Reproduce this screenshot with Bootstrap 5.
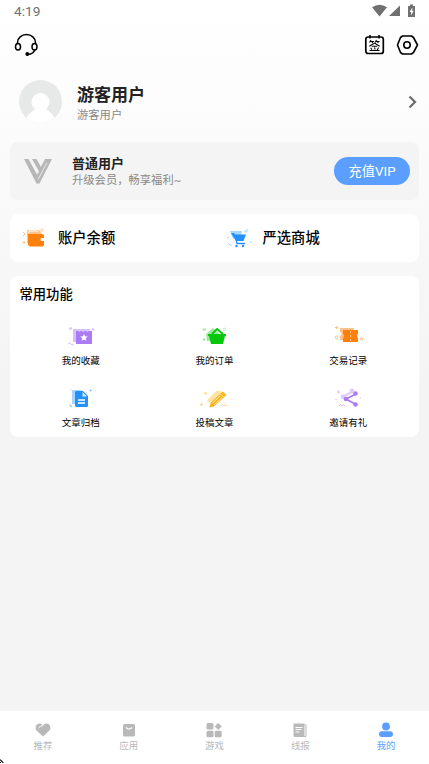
<!DOCTYPE html>
<html lang="zh-CN">
<head>
<meta charset="utf-8">
<meta name="viewport" content="width=device-width, initial-scale=1">
<title>我的</title>
<link href="https://cdn.jsdelivr.net/npm/bootstrap@5.3.0/dist/css/bootstrap.min.css" rel="stylesheet">
<style>
body{font-family:Roboto,"Noto Sans CJK SC",sans-serif;height:764px;overflow:hidden;background:linear-gradient(#fff 0,#fcfcfc 110px,#f8f8f8 240px,#f4f4f4 390px);color:#000;line-height:1}
svg{display:block;flex:none;overflow:visible}
.status{height:24px;padding:0 13px 0 14px;color:#707070;font-size:13.7px}
.tools{height:41px;padding:0 11px 0 14px}
.sign{margin-right:10px}
.profile{height:77px;padding:0 13px 4px 19px}
.profile .names{padding:4px 0 0 15px}
.name{font-size:17px;font-weight:700;line-height:24px;color:#222}
.sub{font-size:11.3px;line-height:18px;color:#888}
.panel{margin:0 10px 14px;border-radius:8px;background:#fff}
.vip{height:58px;background:#f4f4f4;padding:0 9px 0 14px}
.vip .names{padding:3px 0 0 17px}
.level{font-size:13px;font-weight:700;line-height:17px;color:#222}
.charge{width:76px;height:28px;background:#5a9fff;color:#fff;font-size:13.3px;line-height:30px}
.assets{height:48px;font-size:14.3px;font-weight:500}
.features{height:161px}
.features h2{font-size:13.3px;font-weight:500;line-height:18px;margin:0;padding:10px 0 2px 9.500px}
.feature{height:62px;font-size:9.5px}
.feature svg{margin:2px 0 0 2px}
.feature span{line-height:14px;margin-top:6px}
.tabs{height:53px;background:#fff;color:#b9b9b9;font-size:9.4px}
.tabs span{line-height:14px;margin-top:1px}
.tabs .current{color:#5a9fff}
.pointer{left:0;bottom:0}
</style>
<script src="https://cdn.jsdelivr.net/npm/bootstrap@5.3.0/dist/js/bootstrap.bundle.min.js"></script>
</head>
<body class="d-flex flex-column position-relative">
<div class="status d-flex align-items-center justify-content-between">
  <span>4:19</span>
  <svg width="44" height="14" viewBox="0 1 44 14" fill="#707070"><path d="M0 3.300Q7.500-2 15 3.300L7.500 12.500ZM28 1.500V12H17ZM36 2h2V.500h3V2h2v11h-7Z"/><path d="M40.400 3.500 37.600 8h1.500v3.500l2.600-4.700h-1.500Z" fill="#fff"/></svg>
</div>
<header class="tools d-flex align-items-center justify-content-between">
  <svg width="25" height="24" viewBox="0 0 25 24" fill="none" stroke="#000" stroke-width="1.500"><path d="M3.500 10.500V9.500a9 8 0 0 1 18 0v1M21 16.500q-1.500 4.500-7 5"/><ellipse cx="4" cy="13.700" rx="2.500" ry="3.300"/><ellipse cx="20.500" cy="13.700" rx="2.500" ry="3.300"/><circle cx="13.300" cy="21" r="1.200" fill="#000"/></svg>
  <div class="d-flex align-items-center">
    <svg class="sign" width="19" height="20" viewBox="-.5 0 19 20" fill="none" stroke="#000"><rect x=".3" y="2" width="17.500" height="16.500" rx="2.300" stroke-width="1.700"/><path d="M4.500 0v3.500M13.500 0v3.500" stroke-width="1.500"/><path d="m5.500 5-1.500 2.500M5 6.500h3.500M6.500 6.500l.7 1.500M11 5 9.700 7.500M10.500 6.500H14M12 6.500l.7 1.500M3.800 11.300 9 8l5.200 3.300M6.300 11.300h5.400M5.300 12.800l1 2M9 12.300l.6 2.200M13 12.500l-1.500 3M4 15.500h10" stroke-width="1.050"/></svg>
    <svg width="24" height="20" viewBox="0 0 24 20" fill="none" stroke="#000" stroke-width="1.600" stroke-linejoin="round"><path d="M7.500 1h9l2 1.500L22.500 10l-4 7.500-2 1.500h-9l-2-1.500L2.500 10 5.500 2.500Z" transform="translate(1)"/><circle cx="13" cy="10" r="3.200"/></svg>
  </div>
</header>
<section class="profile d-flex align-items-center">
  <svg width="43" height="43" viewBox="0 0 43 43"><defs><clipPath id="face"><circle cx="21.500" cy="21.500" r="21.500"/></clipPath></defs><circle cx="21.500" cy="21.500" r="21.500" fill="#e7e9e9"/><g fill="#fff" clip-path="url(#face)"><circle cx="21.500" cy="22" r="9"/><path d="M7 43q0-10 10-14h9q10 4 10 14Z"/></g></svg>
  <div class="names flex-grow-1"><div class="name">游客用户</div><div class="sub">游客用户</div></div>
  <svg width="8" height="12" viewBox="0 0 8 12" fill="none" stroke="#6c6c6c" stroke-width="2.200"><path d="M1.500 .5 7 6l-5.500 5.500"/></svg>
</section>
<section class="panel vip d-flex align-items-center">
  <svg width="31" height="27" viewBox="0 0 31 27" fill="#b7b7b7"><path d="M0 1h4.500L13 16.500l1.800-3.500L8 1h4.500l4.500 8 4-8H28L15.500 25.500h-3L0 1Z"/><path d="m14 21.500 9-17M6.500 1.500l8 14" fill="none" stroke="#f4f4f4" stroke-width=".8"/></svg>
  <div class="names flex-grow-1"><div class="level">普通用户</div><div class="sub">升级会员，畅享福利~</div></div>
  <button type="button" class="charge btn rounded-pill p-0 border-0">充值VIP</button>
</section>
<section class="panel assets row g-0 align-items-center">
  <div class="col-6 d-flex align-items-center">
    <svg class="ms-2 me-2" width="32" height="24" viewBox="0 0 32 24"><path d="M9 4h12l2 2v11H9Z" fill="#ffc48b"/><path d="M11 7V5h8l1 1" fill="none" stroke="#fff"/><path d="M10 8h14l2 1v3h-3l-1 1.500 1 1.500h3v4l-1 1.500H12L10 19Z" fill="#ff810c"/><path d="m5 6 2 2-2 2M6 15v3M4.500 16.500h3" fill="none" stroke="#ffc48b"/><circle cx="24" cy="4" r="1.300" fill="none" stroke="#ffd4a8"/></svg>
    <span>账户余额</span>
  </div>
  <div class="col-6 d-flex align-items-center">
    <svg class="ms-2 me-2" width="32" height="24" viewBox="0 0 32 24"><path d="M7 5h12l-2 8h-7Z" fill="#a7d5ff"/><path d="M8 7h3l1 1.500h11L20.500 15H13Z" fill="#2490fa"/><path d="M12 9l2 8.500h8" fill="none" stroke="#2490fa" stroke-width="1.300"/><g fill="#2490fa"><circle cx="13.500" cy="20" r="1.200"/><circle cx="20" cy="20" r="1.200"/></g><path d="M22 4v2h2V3M4 11l2 1M5 17l2 2M27 16h2M9 19H7" fill="none" stroke="#a7d5ff"/></svg>
    <span>严选商城</span>
  </div>
</section>
<section class="panel features">
  <h2>常用功能</h2>
  <div class="row g-0 pt-3 px-1">
    <div class="feature col-4 d-flex flex-column align-items-center">
      <svg width="32" height="24" viewBox="0 0 32 24"><path d="M7 5h17v13H7Z" fill="#d8c0fb"/><path d="M10 7h2l1 1 2-1h1l1 1 2-1h1l1 1 2-1h3v13H10Z" fill="#aa7bf4"/><path d="m18 10 1.100 2.300 2.500.3-1.800 1.700.5 2.500-2.300-1.200-2.300 1.200.5-2.500-1.800-1.700 2.500-.3Z" fill="#fff"/><path d="M3 4h3l-1.500 2ZM27 4v3M25.500 5.500h3M2 20q1.500-2 3 0t3 0" fill="none" stroke="#d8b8fb"/></svg><span>我的收藏</span></div>
    <div class="feature col-4 d-flex flex-column align-items-center">
      <svg width="32" height="24" viewBox="0 0 32 24"><path d="M7 10 14 4l6 5v8H8Z" fill="#9ee99e"/><path d="m13 10 5-5 6 5" fill="none" stroke="#08c80b" stroke-width="2"/><path d="M9 10h18v2h-1l-2 8H12l-2-8H9Z" fill="#08c80b"/><path d="M4 5h3L5 7ZM5 14v3M3.500 15.500h3" fill="none" stroke="#9ee99e"/><circle cx="25.500" cy="5.500" r="1.300" fill="none" stroke="#b8efb8"/></svg><span>我的订单</span></div>
    <div class="feature col-4 d-flex flex-column align-items-center">
      <svg width="32" height="24" viewBox="0 0 32 24"><path d="M7 4h14v12H7v-4l2-2-2-2Z" fill="#ffc18a"/><path d="M10 6h15v4q-2 1.500 0 4v4H10v-4q2-2 0-4Z" fill="#ff810c"/><path d="M17.500 7v11" stroke="#ffc18a" stroke-dasharray="2 2"/><path d="M3.500 2v3M2 3.500h3" stroke="#ffc18a"/><g fill="none" stroke="#ffc18a"><circle cx="3.500" cy="13.500" r="1.300"/><circle cx="28.500" cy="15" r="1.300"/></g></svg><span>交易记录</span></div>
    <div class="feature col-4 d-flex flex-column align-items-center">
      <svg width="32" height="24" viewBox="0 0 32 24"><path d="M6 4h9l4 4v10H6Z" fill="#a7d5ff"/><path d="M10 5h7l5 5v10l-1 1H10l-1-1V6Z" fill="#2490fa"/><path d="M16.500 6v4.500H21" fill="#d5ebff"/><path d="M12 14h7M12 17h7" stroke="#fff" stroke-width="1.300"/><path d="m4 18 2 2.500H4ZM24.500 3v3M23 4.500h3M5 3v1M26 16v1" fill="none" stroke="#a7d5ff"/></svg><span>文章归档</span></div>
    <div class="feature col-4 d-flex flex-column align-items-center">
      <svg width="32" height="24" viewBox="0 0 32 24"><path d="m8 16 1-3L18 4.500l5 1-9 10Z" fill="#ffe2a3"/><path d="M10.500 21.500 11.500 17 23 6q1-.5 2 .5l1.500 1.500q.8 1 0 2L15 20.500Z" fill="#fcb41a"/><path d="m13.500 17 7.500-7M15 19l8-7.500M21.500 8l3 3" stroke="#fff" stroke-width=".7"/><path d="M5 7h3L6.500 8.500ZM2.500 17v3M1 18.500h3M22 20l1.500-1.500L25 20l1.500-1.500L28 20" fill="none" stroke="#ffd382"/></svg><span>投稿文章</span></div>
    <div class="feature col-4 d-flex flex-column align-items-center">
      <svg width="32" height="24" viewBox="0 0 32 24"><path d="m9 11 10-5" stroke="#decdfb" stroke-width="2"/><g fill="#decdfb"><circle cx="10" cy="11" r="2.400"/><circle cx="19" cy="5" r="2.400"/></g><path d="m23 8-10 5 9 5" fill="none" stroke="#aa7bf4" stroke-width="1.800"/><g fill="#aa7bf4"><circle cx="13" cy="13" r="2.300"/><circle cx="22.500" cy="7.500" r="2.200"/><circle cx="22.500" cy="18.500" r="2.200"/></g><path d="M5.500 4.500v3M4 6h3M6 20l1.500-1.500L9 20l1.500-1.500L12 20M3 13v1M27 12h1" fill="none" stroke="#e2b9f8"/></svg><span>邀请有礼</span></div>
  </div>
</section>
<nav class="tabs d-flex mt-auto">
  <div class="flex-fill d-flex flex-column align-items-center pt-2"><div class="pt-1"><svg width="16" height="15" viewBox="0 0 16 15"><path d="M8 13.500 1.500 7.500C-.5 5 1 .5 4.500.5 6 .5 7.300 1.300 8 2.500 8.700 1.300 10 .5 11.500.5c3.500 0 5 4.500 3 7Z" fill="#b9b9b9"/><path d="m3.500 5 2-1.700L8 2.500" fill="none" stroke="#fff"/></svg></div><span>推荐</span></div>
  <div class="flex-fill d-flex flex-column align-items-center pt-2"><div class="pt-1"><svg width="16" height="15" viewBox="0 0 16 15"><rect x="2" y="1" width="12" height="12.500" rx="1.500" fill="#b9b9b9"/><path d="M5 4.500q3 3 6 0" fill="none" stroke="#fff" stroke-width="1.100"/></svg></div><span>应用</span></div>
  <div class="flex-fill d-flex flex-column align-items-center pt-2"><div class="pt-1"><svg width="16" height="15" viewBox="0 0 16 15" fill="#b9b9b9"><rect x=".5" y="0" width="7" height="6.500" rx="1.500"/><rect x=".5" y="7.700" width="7" height="6.500" rx="1.500"/><rect x="8.700" y="7.700" width="7" height="6.500" rx="1.500"/><path d="m12.200 0 3.300 3.400-3.300 3.400-3.300-3.400Z" stroke="#b9b9b9" stroke-width=".4"/></svg></div><span>游戏</span></div>
  <div class="flex-fill d-flex flex-column align-items-center pt-2"><div class="pt-1"><svg width="16" height="15" viewBox="0 0 16 15"><path d="M1.500.5h11V14h-10l-1-1Z" fill="#b9b9b9"/><path d="M12.500 2H14v11.500h-2.500" fill="none" stroke="#b9b9b9"/><path d="M3.500 4.500h7M3.500 6.500h6M3.500 9h4" stroke="#fff"/></svg></div><span>线报</span></div>
  <div class="current flex-fill d-flex flex-column align-items-center pt-2"><div class="pt-1"><svg width="16" height="15" viewBox="0 0 16 15" fill="#5a9fff"><circle cx="8" cy="3.500" r="3.900"/><rect x="1" y="8.200" width="14" height="5.800" rx="2.900"/></svg></div><span>我的</span></div>
</nav>
<svg class="pointer position-absolute" width="5" height="5" viewBox="0 0 5 5"><path d="M0 1h1v1h1v1h1v1M0 3l1 1" fill="none" stroke="#000"/></svg>
</body>
</html>
